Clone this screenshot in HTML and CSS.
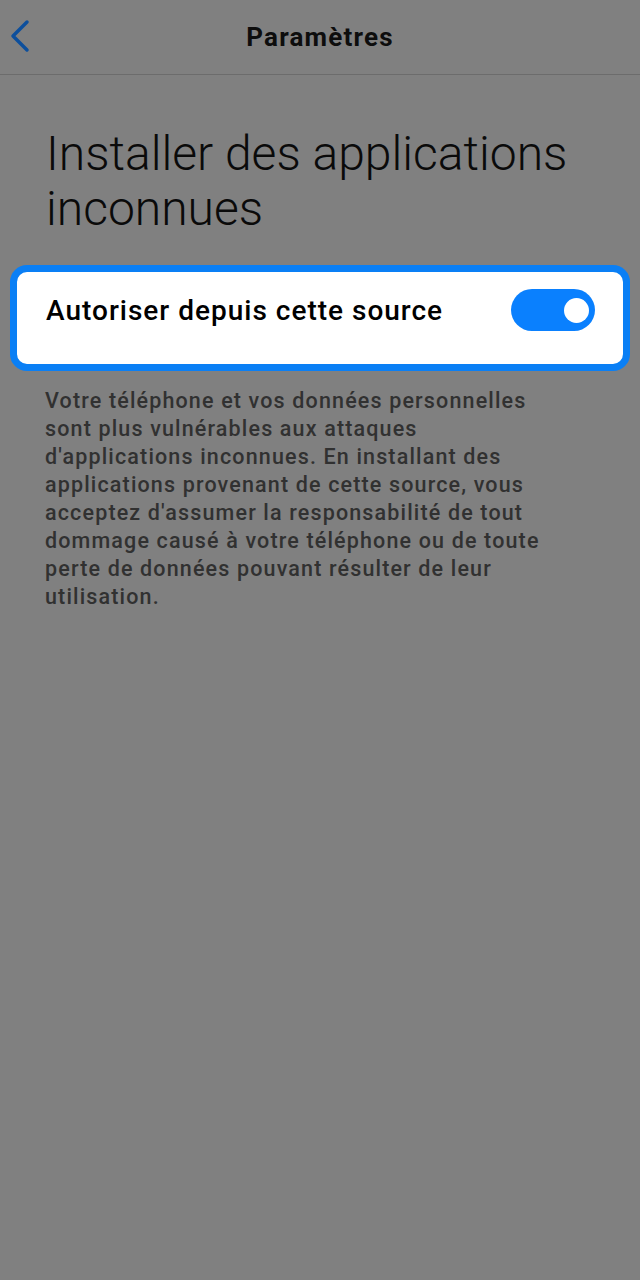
FILE: index.html
```html
<!DOCTYPE html>
<html lang="fr">
<head>
<meta charset="utf-8">
<link rel="stylesheet" href="styles.css">
</head>
<body>
<div class="screen">
  <header class="topbar">
    <span class="back">
      <svg width="24" height="34" viewBox="0 0 24 34"><path d="M19 3 L5 17 L19 31" fill="none" stroke="#0d4f9c" stroke-width="3.5" stroke-linecap="round" stroke-linejoin="round"/></svg>
    </span>
    <h1 class="title">Paramètres</h1>
  </header>
  <main class="content">
    <h2 class="heading">Installer des applications inconnues</h2>
    <div class="card">
      <span class="label">Autoriser depuis cette source</span>
      <span class="toggle"><span class="knob"></span></span>
    </div>
    <p class="desc">Votre téléphone et vos données personnelles sont plus vulnérables aux attaques d'applications inconnues. En installant des applications provenant de cette source, vous acceptez d'assumer la responsabilité de tout dommage causé à votre téléphone ou de toute perte de données pouvant résulter de leur utilisation.</p>
  </main>
</div>
</body>
</html>
```
FILE: styles.css
```css
html, body { margin: 0; padding: 0; }
body { background: #808080; font-family: Roboto, "Noto Sans", sans-serif; }
.screen { width: 640px; min-height: 1280px; background: #808080; }
.topbar {
  position: relative;
  height: 74px;
  border-bottom: 1px solid #6c6c6c;
  display: flex;
  align-items: center;
  justify-content: center;
}
.back { position: absolute; left: 8px; top: 19px; display: block; }
.back svg { display: block; }
.title { margin: 0; font-size: 26px; font-weight: 700; color: #0d0d0d; letter-spacing: 1.2px; }
.content { padding: 0 10px; }
.heading {
  margin: 51px 0 0 36px;
  font-size: 48px;
  font-weight: 300;
  line-height: 55px;
  color: #0a0a0a;
}
.card {
  margin-top: 29px;
  height: 106px;
  box-sizing: border-box;
  background: #fff;
  border: 7px solid #0a7ff5;
  border-radius: 17px;
  display: flex;
  align-items: center;
  justify-content: space-between;
  padding: 0 28px 16px 29px;
}
.label { font-size: 28px; color: #000; font-weight: 500; letter-spacing: 1px; }
.toggle {
  width: 84px; height: 42px; border-radius: 21px; background: #0a80fe;
  display: flex; align-items: center; justify-content: flex-end; padding-right: 6px; box-sizing: border-box;
}
.knob { width: 25px; height: 25px; border-radius: 50%; background: #fff; }
.desc {
  margin: 16px 0 0 35px;
  width: 505px;
  font-size: 21.5px;
  line-height: 28px;
  color: #313131;
  font-weight: 500;
  letter-spacing: 1.15px;
}
```
